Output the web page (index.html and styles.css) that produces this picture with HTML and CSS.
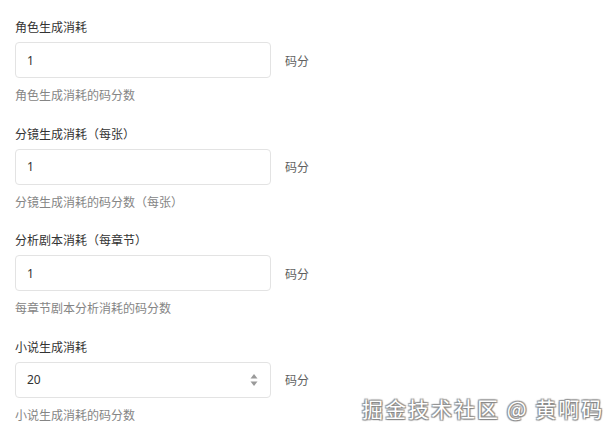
FILE: index.html
```html
<!DOCTYPE html>
<html lang="zh">
<head>
<meta charset="utf-8">
<link rel="stylesheet" href="styles.css">
</head>
<body>
<div class="form">
  <div class="field">
    <div class="label">角色生成消耗</div>
    <div class="row">
      <div class="input"><span class="value">1</span></div>
      <span class="unit">码分</span>
    </div>
    <div class="help">角色生成消耗的码分数</div>
  </div>
  <div class="field">
    <div class="label">分镜生成消耗（每张）</div>
    <div class="row">
      <div class="input"><span class="value">1</span></div>
      <span class="unit">码分</span>
    </div>
    <div class="help">分镜生成消耗的码分数（每张）</div>
  </div>
  <div class="field">
    <div class="label">分析剧本消耗（每章节）</div>
    <div class="row">
      <div class="input"><span class="value">1</span></div>
      <span class="unit">码分</span>
    </div>
    <div class="help">每章节剧本分析消耗的码分数</div>
  </div>
  <div class="field">
    <div class="label">小说生成消耗</div>
    <div class="row">
      <div class="input"><span class="value">20</span>
        <span class="spin">
          <svg width="8" height="14" viewBox="0 0 8 14"><path d="M4 1 L7.5 5.5 L0.5 5.5 Z" fill="#9a9a9a"/><path d="M4 13 L7.5 8.5 L0.5 8.5 Z" fill="#9a9a9a"/></svg>
        </span>
      </div>
      <span class="unit">码分</span>
    </div>
    <div class="help">小说生成消耗的码分数</div>
  </div>
</div>
<div class="watermark">掘金技术社区 @ 黄啊码</div>
</body>
</html>
```
FILE: styles.css
```css
html, body {
  margin: 0;
  padding: 0;
  background: #ffffff;
}
body {
  font-family: "Microsoft YaHei", "Noto Sans CJK SC", "Noto Sans", sans-serif;
  font-size: 12px;
  color: #333333;
  width: 614px;
  height: 435px;
  overflow: hidden;
  position: relative;
}
.form {
  padding: 17px 0 0 15px;
  display: flex;
  flex-direction: column;
  gap: 19.67px;
}
.field {
  display: flex;
  flex-direction: column;
}
.label {
  line-height: 20px;
  height: 20px;
  color: #333333;
}
.row {
  margin-top: 5px;
  display: flex;
  align-items: center;
  gap: 14px;
}
.input {
  box-sizing: border-box;
  width: 256px;
  height: 36px;
  border: 1px solid #e3e3e3;
  border-radius: 4px;
  display: flex;
  align-items: center;
  justify-content: space-between;
  padding: 0 11px 0 11px;
  color: #333333;
  font-family: "Microsoft YaHei", "Noto Sans", "Noto Sans CJK SC", sans-serif;
}
.spin {
  display: flex;
  align-items: center;
  margin-right: 1px;
}
.unit {
  color: #5f5f5f;
}
.help {
  margin-top: 8px;
  line-height: 18px;
  height: 18px;
  color: #858585;
}
.watermark {
  position: absolute;
  left: 362px;
  top: 395px;
  font-size: 21px;
  line-height: 26px;
  color: #ffffff;
  letter-spacing: 2px;
  white-space: nowrap;
  text-shadow: 0 0 1px #777, 1px 1px 1px #888, -1px -1px 1px #999, 1px -1px 1px #999, -1px 1px 1px #999;
}
```
